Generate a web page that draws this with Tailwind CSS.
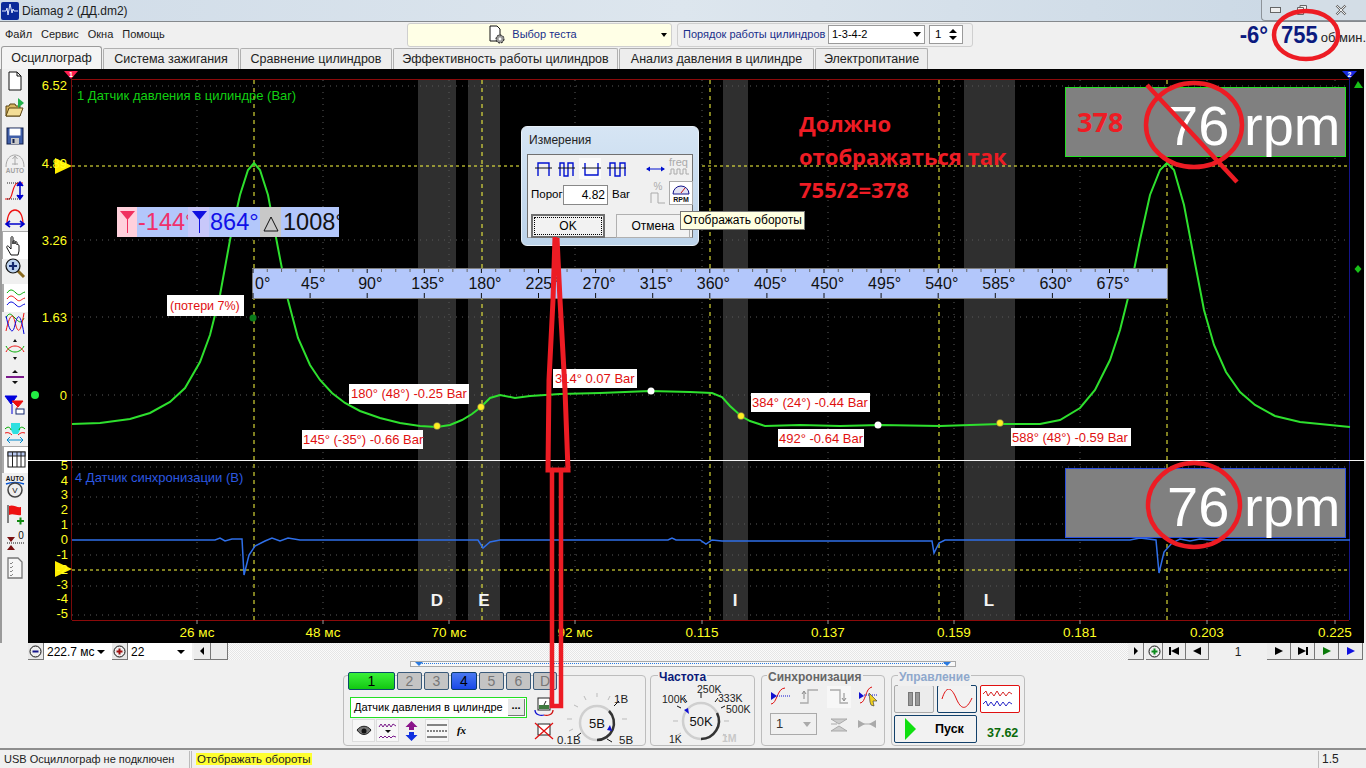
<!DOCTYPE html>
<html lang="ru">
<head>
  <meta charset="UTF-8">
  <title>Diamag 2 (ДД.dm2)</title>
  <script src="https://cdn.jsdelivr.net/npm/@tailwindcss/browser@4"></script>
</head>
<body class="relative w-[1366px] h-[768px] overflow-hidden bg-[#f0f0f0] text-[12px] text-black [font-family:'Liberation_Sans',sans-serif]">

  <!-- title bar -->
  <div class="h-[22px] flex items-center border-b border-[#85898d] bg-gradient-to-r from-[#d0dce8] via-[#dde6ee] to-[#c9d7e4]">
    <svg class="ml-[1px] w-[18px] h-[18px]" viewBox="0 0 18 18"><rect width="18" height="18" rx="2" fill="#0a2a9a"/><path d="M1 9h4l1-3 1 7 2-11 2 9 1-4 1 2h4" fill="none" stroke="#dfe8ff" stroke-width="1"/></svg>
    <span class="ml-[3px] text-[12px] text-[#1c1c1c]">Diamag 2 (ДД.dm2)</span>
    <div class="ml-auto w-[105px] h-[21px] -mt-[1px] flex items-center border border-t-0 border-r-0 border-[#8d9399] rounded-bl-[4px] bg-[#d3dde6]">
      <div class="w-[27px] flex justify-center"><div class="w-[11px] h-[6px] border border-[#666] bg-[#eee]"></div></div>
      <div class="w-[26px] flex justify-center"><svg class="w-[12px] h-[12px]" viewBox="0 0 12 12"><path d="M1.5 3.5h6v7h-6zM4 3.5V1.5h6.5v7H7.5" fill="#eee" stroke="#666"/></svg></div>
      <div class="flex-1 flex justify-center"><svg class="w-[12px] h-[12px]" viewBox="0 0 12 12"><path d="M1.5 1.5l9 9M10.5 1.5l-9 9" stroke="#666" stroke-width="2.4"/><path d="M1.5 1.5l9 9M10.5 1.5l-9 9" stroke="#eee" stroke-width="1"/></svg></div>
    </div>
  </div>

  <!-- menu and test selector -->
  <div class="h-[25px] flex items-center relative">
    <div class="flex gap-[9px] pl-[5px] w-[407px] text-[11px] text-[#222]">
      <span>Файл</span><span>Сервис</span><span>Окна</span><span>Помощь</span>
    </div>
    <div class="w-[265px] h-[24px] flex items-center justify-center relative bg-[#ffffe6] border border-[#cfcfcf] rounded-[3px]">
      <svg class="w-[22px] h-[20px] mr-[3px]" viewBox="0 0 22 20"><path d="M3 1h7l3 3v12H3z" fill="#fff" stroke="#111"/><circle cx="13" cy="14" r="4" fill="#999" stroke="#111" stroke-dasharray="2 1"/><circle cx="13" cy="14" r="1.4" fill="#fff"/></svg>
      <span class="text-[11px] text-[#1a2f8a] mr-[15px]">Выбор теста</span>
      <span class="absolute right-[4px] top-[9px] w-0 h-0 border-x-[3px] border-x-transparent border-t-[4px] border-t-black"></span>
    </div>
    <div class="ml-[5px] w-[296px] h-[24px] flex items-center border border-[#cfcfcf] rounded-[3px] pl-[5px]">
      <span class="text-[11px] text-[#1a2f8a] w-[145px] whitespace-nowrap">Порядок работы цилиндров</span>
      <div class="w-[97px] h-[19px] flex items-center justify-between px-[3px] bg-white border border-[#9a9a9a] text-[11px]">1-3-4-2<span class="w-0 h-0 border-x-[4px] border-x-transparent border-t-[5px] border-t-black"></span></div>
      <div class="ml-[4px] w-[34px] h-[19px] flex items-center justify-between px-[5px] bg-white border border-[#9a9a9a] text-[11.5px]">1<span class="flex flex-col gap-[3px]"><span class="w-0 h-0 border-x-[4px] border-x-transparent border-b-[4px] border-b-black"></span><span class="w-0 h-0 border-x-[4px] border-x-transparent border-t-[4px] border-t-black"></span></span></div>
    </div>
    <div class="ml-auto flex items-baseline text-[#0b1a7f] font-bold">
      <span class="text-[22px] mr-[13px] inline-block scale-y-[1.12]">-6°</span>
      <span class="text-[22px] mr-[3px] inline-block scale-y-[1.12]">755</span>
      <span class="text-[13px] font-normal text-[#222] whitespace-nowrap">об/мин.</span>
    </div>
  </div>

  <!-- tabs -->
  <div class="h-[22px] flex items-end pl-[1px] gap-[1px] text-[12.5px] text-[#222] whitespace-nowrap">
    <div class="w-[101px] h-[23px] flex items-center justify-center bg-[#f4f4f4] border border-b-0 border-[#9b9b9b] rounded-t-[3px]">Осциллограф</div>
    <div class="w-[136px] h-[21px] flex items-center justify-center bg-[#ededed] border border-b-0 border-[#b0b0b0] rounded-t-[2px]">Система зажигания</div>
    <div class="w-[152px] h-[21px] flex items-center justify-center bg-[#ededed] border border-b-0 border-[#b0b0b0] rounded-t-[2px]">Сравнение цилиндров</div>
    <div class="w-[225px] h-[21px] flex items-center justify-center bg-[#ededed] border border-b-0 border-[#b0b0b0] rounded-t-[2px]">Эффективность работы цилиндров</div>
    <div class="w-[195px] h-[21px] flex items-center justify-center bg-[#ededed] border border-b-0 border-[#b0b0b0] rounded-t-[2px]">Анализ давления в цилиндре</div>
    <div class="w-[113px] h-[21px] flex items-center justify-center bg-[#ededed] border border-b-0 border-[#b0b0b0] rounded-t-[2px]">Электропитание</div>
  </div>

  <!-- main row -->
  <div class="h-[574px] flex">
    <div class="w-[28px] border-l-2 border-[#9a9a9a] overflow-hidden">
      <div class="-mt-[1.5px] flex flex-col items-center -ml-[1px]">
        <div class="h-[27.3px] w-[26px] flex items-center justify-center"><svg class="w-[22px] h-[22px]" viewBox="0 0 22 22"><path d="M5 2h8l4 4v14H5z" fill="#fff" stroke="#111"/><path d="M13 2v4h4" fill="none" stroke="#111"/></svg></div>
        <div class="h-[27.3px] w-[26px] flex items-center justify-center"><svg class="w-[22px] h-[22px]" viewBox="0 0 22 22"><path d="M2 9h3l1-2h5l1 2h4v10H2z" fill="#d8b662" stroke="#5b4512"/><path d="M2 19l3-8h14l-3 8z" fill="#f3dd96" stroke="#5b4512"/><path d="M14 1l6 5-6 5z" fill="#22b14c"/></svg></div>
        <div class="h-[27.3px] w-[26px] flex items-center justify-center"><svg class="w-[22px] h-[22px]" viewBox="0 0 22 22"><rect x="3" y="3" width="16" height="16" fill="#3f5ea8" stroke="#15214a"/><rect x="5.5" y="3.5" width="11" height="7" fill="#fff"/><rect x="7" y="13" width="8" height="6" fill="#c8c8c8"/><rect x="8.5" y="14" width="2" height="4" fill="#15214a"/></svg></div>
        <div class="h-[27.3px] w-[26px] flex items-center justify-center"><svg class="w-[22px] h-[22px]" viewBox="0 0 22 22"><path d="M2 15c0-8 4-12 9-12s9 4 9 12" fill="none" stroke="#a8a8a8"/><path d="M11 4v9M8.5 7L11 4l2.500 3M8 12h6" fill="none" stroke="#a8a8a8"/><text x="11" y="21" font-size="6.500" font-weight="700" text-anchor="middle" fill="#a0a0a0">AUTO</text></svg></div>
        <div class="h-[27.3px] w-[26px] flex items-center justify-center"><svg class="w-[22px] h-[22px]" viewBox="0 0 22 22"><path d="M1 20h4c4 0 3-16 9-16h5" fill="none" stroke="#e11" stroke-width="1.200"/><path d="M3 4h11M3 20h14" stroke="#222" stroke-dasharray="1 1"/><path d="M16 4v15M13 7l3-4 3 4M13 16l3 4 3-4" fill="#00c" stroke="#00c" stroke-width="1.500"/></svg></div>
        <div class="h-[27.3px] w-[26px] flex items-center justify-center"><svg class="w-[22px] h-[22px]" viewBox="0 0 22 22"><path d="M3 18C3 7 7 3 11 3s8 4 8 15" fill="none" stroke="#e11" stroke-width="1.300"/><path d="M3 17h16M6 14l-4 3 4 3M16 14l4 3-4 3" fill="none" stroke="#00c" stroke-width="1.600"/></svg></div>
        <div class="h-[27.3px] w-[26px] flex items-center justify-center bg-white border-t border-l border-[#aaa]"><svg class="w-[22px] h-[22px]" viewBox="0 0 22 22"><path d="M7 21l-4-7c-1-2 1-3 2-1l2 2V4c0-2 2-2 2 0v6-2c0-2 2-2 2 0v2-1c0-2 2-2 2 0v2c0-1 2-1 2 1v5l-1 4z" fill="#fff" stroke="#111"/></svg></div>
        <div class="h-[27.3px] w-[26px] -mt-[4px] flex items-center justify-center"><svg class="w-[22px] h-[22px]" viewBox="0 0 22 22"><path d="M13 13l7 7" stroke="#8a6a20" stroke-width="3"/><circle cx="9" cy="9" r="7" fill="#bcd2ee" stroke="#111" stroke-width="1.200"/><path d="M5 9h8M9 5v8" stroke="#14286e" stroke-width="2.200"/></svg></div>
        <div class="h-[27.3px] w-[26px] mt-[2.5px] flex items-center justify-center bg-white border-l-2 border-[#aaa]"><svg class="w-[22px] h-[22px]" viewBox="0 0 22 22"><path d="M2 6c3-4 5-4 9 0s5 0 9-1" fill="none" stroke="#0a0"/><path d="M2 12c3-4 5-4 9 0s5 0 9-1" fill="none" stroke="#e11"/><path d="M2 18c3-4 5-4 9 0s5 0 9-1" fill="none" stroke="#00d"/></svg></div>
        <div class="h-[27.3px] w-[26px] -mt-[2.5px] flex items-center justify-center"><svg class="w-[22px] h-[22px]" viewBox="0 0 22 22"><path d="M2 6c3-7 6-3 9 0s6 7 9 0" fill="none" stroke="#0a0"/><path d="M2 19c4-18 7-18 9-9s5 16 9-9" fill="none" stroke="#e11"/><path d="M2 4c4 18 7 18 9 9s5-16 9 9" fill="none" stroke="#00d"/></svg></div>
        <div class="h-[27.3px] w-[26px] flex items-center justify-center"><svg class="w-[22px] h-[22px]" viewBox="0 0 22 22"><path d="M2 7c4 8 14 8 18 0" fill="none" stroke="#0a0"/><path d="M2 13c4-8 14-8 18 0" fill="none" stroke="#e11"/><path d="M9 3h4l-2-3zM9 18h4l-2 3z" fill="#111"/></svg></div>
        <div class="h-[27.3px] w-[26px] flex items-center justify-center"><svg class="w-[22px] h-[22px]" viewBox="0 0 22 22"><path d="M2 11h18" stroke="#7a1a8a" stroke-width="2"/><path d="M8 7l3-3 3 3zM8 15l3 3 3-3z" fill="#111"/></svg></div>
        <div class="h-[27.3px] w-[26px] flex items-center justify-center"><svg class="w-[22px] h-[22px]" viewBox="0 0 22 22"><path d="M1 2h12l-6 8zM8 10v10" fill="#00d" stroke="#00d"/><path d="M8 7h11l-5 6zM13 13v6" fill="#e11" stroke="#e11"/><rect x="12" y="15" width="8" height="5" fill="#fff" stroke="#14286e"/></svg></div>
        <div class="h-[27.3px] w-[26px] flex items-center justify-center"><svg class="w-[22px] h-[22px]" viewBox="0 0 22 22"><path d="M7 2h9v7l-2 4H9L7 9z" fill="#2fe0e0"/><path d="M1 8c3-3 5-2 6 1M15 9c1-3 3-4 6-1" fill="none" stroke="#0a0"/><path d="M1 12c3-1 5 0 7 2M14 14c2-2 4-3 7-2" fill="none" stroke="#e11"/><path d="M4 19h14M6 16l-3 3 3 3M16 16l3 3-3 3" fill="none" stroke="#08c"/></svg></div>
        <div class="h-[27.3px] w-[26px] flex items-center justify-center bg-white border-t border-l-2 border-[#aaa]"><svg class="w-[22px] h-[22px]" viewBox="0 0 22 22"><rect x="3" y="3" width="17" height="15" fill="#fff" stroke="#222"/><rect x="3" y="3" width="17" height="4" fill="#b7c8f0" stroke="#222"/><path d="M7.500 3v15M12 3v15M16 3v15" stroke="#222"/></svg></div>
        <div class="h-[27.3px] w-[26px] flex items-center justify-center"><svg class="w-[22px] h-[24px]" viewBox="0 0 22 24"><text x="11" y="6" font-size="6.500" font-weight="700" text-anchor="middle" fill="#111">AUTO</text><path d="M2 9c5-2 13-2 18 0" fill="none" stroke="#0050d0" stroke-width="1.500"/><circle cx="11" cy="15" r="7" fill="#eee" stroke="#444" stroke-width="1.500"/><text x="11" y="18" font-size="8" text-anchor="middle" fill="#111">V</text></svg></div>
        <div class="h-[27.3px] w-[26px] flex items-center justify-center"><svg class="w-[22px] h-[22px]" viewBox="0 0 22 22"><path d="M4 2v18" stroke="#111"/><path d="M5 3c4-2 8 2 12 1v8c-4 1-8-2-12 0z" fill="#e11"/><path d="M13 18h7M16.500 14.500v7" stroke="#128a12" stroke-width="2"/></svg></div>
        <div class="h-[27.3px] w-[26px] flex items-center justify-center"><svg class="w-[22px] h-[22px]" viewBox="0 0 22 22"><path d="M3 7h8l-4 5zM3 20h8l-4-5z" fill="#7a1010"/><path d="M3 13h18" stroke="#111" stroke-dasharray="1 1"/><text x="17" y="9" font-size="10" text-anchor="middle" fill="#111">0</text></svg></div>
        <div class="h-[27.3px] w-[26px] flex items-center justify-center"><svg class="w-[22px] h-[22px]" viewBox="0 0 22 22"><path d="M4 1h10l4 4v16H4z" fill="#f6f6f6" stroke="#777" stroke-width="1.300"/><path d="M6 6l1 1 2-2M6 10l1 1 2-2M6 14l1 1 2-2M6 18l1 1 2-2" fill="none" stroke="#888"/></svg></div>
      </div>
    </div>

    <!-- oscillogram canvas -->
    <div class="relative w-[1336px] h-[574px] bg-black overflow-hidden">
      <svg id="scope" class="absolute inset-0 w-[1336px] h-[574px]" viewBox="28 69 1336 574">
        <g id="bands" fill="#2f2f2f">
          <rect x="418" y="80" width="38" height="540"/>
          <rect x="468" y="80" width="32" height="540"/>
          <rect x="723" y="80" width="25" height="540"/>
          <rect x="964" y="80" width="51" height="540"/>
        </g>
        <g id="grid" stroke="#5a5a5a" stroke-dasharray="1 5"></g>
        <g id="cursors" stroke="#ffff40" stroke-dasharray="4 4">
          <path d="M254 80V620M482 80V620M710 80V620M939 80V620M1167 80V620"/>
          <path d="M72 166H1349M72 570H1349" stroke-dasharray="3 3"/>
        </g>
        <path d="M71 79.500H1349M72 620.500H1349" stroke="#8b0a0a"/>
        <path d="M71.500 79V620" stroke="#7a0a0a"/>
        <path d="M1349.500 79V620" stroke="#14148a"/>
        <path d="M28 460.500H1364" stroke="#f4f4f4"/>
        <path d="M64 71h14l-7 8z" fill="#ff2050"/>
        <path d="M1342 71h15l-7.500 8z" fill="#1a2be0"/>
        <text x="71" y="76.500" font-size="7" font-weight="700" text-anchor="middle" fill="#fff">1</text>
        <text x="1349.500" y="76.500" font-size="7" font-weight="700" text-anchor="middle" fill="#fff">2</text>
        <path d="M1354 88l4-7 5 7z" fill="#18c018"/>
        <path d="M1358 265l3.500 4-3.500 4-3.500-4z" fill="#18c018"/>
        <circle cx="35" cy="395" r="4" fill="#22ee44"/>
        <path d="M55 158l17 8-17 8z" fill="#ffee00"/>
        <path d="M55 561l17 8-17 8z" fill="#ffee00"/>

        <polyline fill="none" stroke="#2ee02e" stroke-width="2" points="72,424 100,423 130,419 150,413 170,402 185,388 200,362 210,335 220,295 230,240 240,195 248,170 254,163 260,170 268,195 278,248 288,300 298,338 310,365 320,380 332,393 345,403 360,411 380,418 400,423 420,426 437,427 450,425 462,420 472,414 481,407 490,398 500,395 515,398 530,396 560,394 600,393 650,391 690,392 712,393 722,397 730,406 741,416 750,421 765,426 800,425 840,426 880,425 940,426 1000,424 1040,424 1060,420 1080,408 1095,390 1110,360 1120,330 1130,290 1140,240 1150,195 1160,170 1167,163 1174,170 1184,205 1194,258 1204,310 1214,345 1226,372 1240,392 1255,405 1275,416 1300,422 1330,425 1350,427"/>
        <path fill="none" stroke="#2f6fe8" stroke-width="1.500" d="M72 540H215L220 538L225 541L232 539H242L244 575L249 555L255 546L265 541L272 538L280 541L288 538L300 540H478L483 548L490 542L500 540H668L672 538L676 540H700L706 544L712 540L722 541H932L934 553L939 543L945 540H1130L1140 538L1156 540L1159 573L1164 552L1172 543L1180 539L1190 541L1200 539L1210 540H1350"/>

        <g fill="#ffee22" stroke="#555" stroke-width=".5">
          <circle cx="437" cy="426" r="3.500"/><circle cx="481" cy="407" r="3.500"/><circle cx="741" cy="416" r="3.500"/><circle cx="1000" cy="423" r="3.500"/>
        </g>
        <circle cx="651" cy="391" r="3.500" fill="#fff"/><circle cx="878" cy="425" r="3.500" fill="#fff"/>
        <circle cx="253" cy="318" r="3.500" fill="#0a7a1a"/>

        <g id="yaxis" fill="#ffff20" font-size="13"></g>
        <g id="xaxis" fill="#ffff20" font-size="13.500" text-anchor="middle"></g>

        <text x="77" y="100" fill="#12d012" font-size="13">1 Датчик давления в цилиндре (Bar)</text>
        <text x="75" y="482" fill="#2c58e0" font-size="13">4 Датчик синхронизации (В)</text>

        <g fill="#f4f4f4" font-size="17" font-weight="700" text-anchor="middle">
          <text x="437" y="606">D</text><text x="484" y="606">E</text><text x="735" y="606">I</text><text x="989" y="606">L</text>
        </g>

        <!-- angle ruler -->
        <rect x="252.500" y="268.500" width="915" height="30" fill="#b3c7fb" stroke="#808080"/>
        <g id="ruler" font-size="16" fill="#111"></g>

        <!-- rpm plates -->
        <rect x="1065.500" y="87.500" width="280" height="69" fill="#808080" stroke="#22e022"/>
        <rect x="1065.500" y="468.500" width="280" height="69" fill="#808080" stroke="#2a4fe0"/>
        <g fill="#fff" font-size="56">
          <text x="1167" y="145">76</text><text x="1244" y="145">rpm</text>
          <text x="1167" y="526">76</text><text x="1244" y="526">rpm</text>
        </g>

        <!-- note labels -->
        <g id="notes" font-size="13" fill="#e01010">
          <rect x="167" y="295" width="77" height="21" fill="#fff"/><text x="170" y="310" font-size="12.500">(потери 7%)</text>
          <rect x="349" y="384" width="120" height="20" fill="#fff"/><text x="351" y="398">180° (48°) -0.25 Bar</text>
          <rect x="302" y="430" width="121" height="19" fill="#fff"/><text x="303" y="444">145° (-35°) -0.66 Bar</text>
          <rect x="553" y="369" width="84" height="19" fill="#fff"/><text x="555" y="383">314° 0.07 Bar</text>
          <rect x="751" y="393" width="119" height="19" fill="#fff"/><text x="752" y="407">384° (24°) -0.44 Bar</text>
          <rect x="778" y="429" width="86" height="18" fill="#fff"/><text x="779" y="443">492° -0.64 Bar</text>
          <rect x="1011" y="428" width="120" height="18" fill="#fff"/><text x="1012" y="442">588° (48°) -0.59 Bar</text>
        </g>

        <!-- angle readout -->
        <rect x="117" y="207" width="222" height="30" fill="#b3c7fb"/>
        <rect x="117" y="207" width="20" height="30" fill="#ffd0dc"/>
        <rect x="188" y="207" width="21" height="30" fill="#c8c8fa"/>
        <rect x="260" y="207" width="21" height="30" fill="#c8c8c8"/>
        <path d="M120 211h15l-7.500 9z" fill="#f0305f"/><path d="M127.500 218v15" stroke="#f0305f"/>
        <path d="M192 211h15l-7.500 9z" fill="#1010e0"/><path d="M199.500 218v15" stroke="#1010e0"/>
        <path d="M271 217l-7 14h14z" fill="none" stroke="#111"/>
        <g font-size="23.500">
          <svg x="138" y="207" width="50" height="30"><text x="0" y="23" fill="#f0306a">-144°</text></svg>
          <text x="210" y="230" fill="#1010e8">864°</text>
          <svg x="283" y="207" width="56" height="30"><text x="0" y="23" fill="#111">1008°</text></svg>
        </g>
      </svg>

      <!-- measurements dialog -->
      <div class="absolute left-[493px] top-[57px] w-[178px] h-[120px] rounded-[6px] bg-gradient-to-b from-[#d6e5f4] to-[#bcd3ea] border border-[#e8f0f8] shadow">
        <div class="h-[27px] pl-[7px] pt-[4px] text-[12px] text-[#222]">Измерения</div>
        <div class="mx-[5px] h-[84px] bg-[#f0f0f0] border border-[#707070] border-b-[#a0a0a0] pt-[3px] pl-[3px]">
          <div class="flex items-center h-[25px]">
            <svg class="w-[158px] h-[25px]" viewBox="0 0 158 25"><rect x="48" y="0" width="22" height="21" fill="#fafafa"/><g fill="none" stroke="#0010d0" stroke-width="1.400"><path d="M7 18V5h11v13"/><path d="M4 10h17" stroke="#111" stroke-width="1"/><path d="M29 18V5h4v13h4V5h5v13"/><path d="M27 10h17" stroke="#111" stroke-width="1"/><path d="M54 5v12h13V5"/><path d="M51 10h19" stroke="#111" stroke-width="1"/><path d="M79 18V5h5v13h5V5h5v13"/><path d="M76 10h19" stroke="#111" stroke-width="1"/></g><path d="M116 11h17" stroke="#0010d0"/><path d="M115 11l4-2.500v5zM134 11l-4-2.500v5z" fill="#0010d0"/></svg>
          </div>
          <div class="flex items-center h-[25px] -mt-[1px] relative">
            <span class="text-[11.5px] w-[32px]">Порог</span>
            <div class="w-[45px] h-[20px] bg-white border border-[#888] text-right pr-[2px] text-[12px] leading-[18px]">4.82</div>
            <span class="ml-[4px] text-[11.5px]">Bar</span>
            <svg class="absolute left-[118px] top-[-1px] w-[18px] h-[24px]" viewBox="0 0 18 24"><path d="M2 22V12h7v10h7" fill="none" stroke="#aaa"/><text x="9" y="9" font-size="10" text-anchor="middle" fill="#aaa">%</text></svg>
            <div class="absolute left-[138px] -top-[1px] w-[24px] h-[24px] bg-white border border-[#aaa]"><svg class="w-[22px] h-[22px]" viewBox="0 0 22 22"><path d="M3 12a8 8 0 0 1 16 0z" fill="#e4e4f4" stroke="#14148a"/><path d="M11 11l4-5" stroke="#c01010"/><text x="11" y="20" font-size="7" font-weight="700" text-anchor="middle" fill="#111">RPM</text></svg></div>
            <div class="absolute left-[138px] -top-[25px] text-[11px] leading-[11px] text-[#aaa]">freq<svg class="w-[20px] h-[7px]" viewBox="0 0 20 7"><path d="M0 6h2V1h3v5h3V1h3v5h3V1h3v5h3" fill="none" stroke="#aaa"/></svg></div>
          </div>
          <div class="flex gap-[11px] mt-[7px]">
            <div class="w-[74px] h-[24px] flex items-center justify-center border-2 border-[#707070] bg-[#f2f2f2]"><div class="w-[68px] h-[18px] border border-dotted border-black text-center text-[12px] leading-[16px]">OK</div></div>
            <div class="w-[74px] h-[24px] flex items-center justify-center border border-[#b0b0b0] bg-[#f2f2f2] text-[12px]">Отмена</div>
          </div>
        </div>
      </div>
      <div class="absolute left-[652px] top-[142px] w-[125px] h-[19px] bg-[#ffffe1] border border-[#777] text-[12px] leading-[17px] text-center whitespace-nowrap">Отображать обороты</div>
    </div>
  </div>

  <!-- scroll row -->
  <div class="h-[17px] ml-[28px] flex items-stretch text-[12px]">
    <div class="w-[16px] bg-[#e8e8e8] border-b border-r border-[#777] flex items-center justify-center"><svg class="w-[13px] h-[13px]" viewBox="0 0 13 13"><circle cx="6.500" cy="6.500" r="5.500" fill="#eee" stroke="#111"/><path d="M3.500 6.500h6" stroke="#14148a" stroke-width="2"/></svg></div>
    <div class="w-[68px] bg-white flex items-center justify-between pl-[3px] pr-[7px]">222.7 мс<span class="w-0 h-0 border-x-[4px] border-x-transparent border-t-[4px] border-t-black"></span></div>
    <div class="w-[16px] bg-[#e8e8e8] border-b border-r border-[#777] flex items-center justify-center"><svg class="w-[13px] h-[13px]" viewBox="0 0 13 13"><circle cx="6.500" cy="6.500" r="5.500" fill="#eee" stroke="#111"/><path d="M3.500 6.500h6M6.500 3.500v6" stroke="#a01010" stroke-width="2"/></svg></div>
    <div class="w-[64px] bg-white flex items-center justify-between pl-[3px] pr-[7px]">22<span class="w-0 h-0 border-x-[4px] border-x-transparent border-t-[4px] border-t-black"></span></div>
    <div class="w-[17px] ml-[2px] bg-[#ececec] border-b border-r border-[#777] flex items-center justify-center"><span class="w-0 h-0 border-y-[4px] border-y-transparent border-r-[4px] border-r-black"></span></div>
    <div class="w-[17px] bg-[#ececec] border-b border-r border-[#777]"></div>
    <div class="w-[900px] bg-[repeating-conic-gradient(#e6e6e6_0_25%,#fbfbfb_0_50%)] bg-[length:2px_2px]"></div>
    <div class="w-[16px] bg-[#ececec] border-b border-r border-[#777] flex items-center justify-center"><span class="w-0 h-0 border-y-[4px] border-y-transparent border-l-[4px] border-l-black"></span></div>
    <div class="w-[17px] ml-[2px] flex items-center justify-center bg-[#ececec] border-b border-r border-[#777]"><svg class="w-[13px] h-[13px]" viewBox="0 0 13 13"><circle cx="6.500" cy="6.500" r="5.500" fill="#eee" stroke="#111"/><path d="M3.500 6.500h6M6.500 3.500v6" stroke="#0a8a1a" stroke-width="2"/></svg></div>
    <div class="w-[23px] flex items-center justify-center bg-[#ececec] border-b border-r border-[#777]"><span class="w-[2px] h-[8px] bg-black"></span><span class="w-0 h-0 border-y-[4px] border-y-transparent border-r-[8px] border-r-black"></span></div>
    <div class="w-[23px] flex items-center justify-center bg-[#ececec] border-b border-r border-[#777]"><span class="w-0 h-0 border-y-[4px] border-y-transparent border-r-[8px] border-r-black"></span></div>
    <div class="w-[58px] flex items-center justify-center text-[12px] text-[#222]">1</div>
    <div class="w-[24px] flex items-center justify-center bg-[#ececec] border-b border-r border-[#777]"><span class="w-0 h-0 border-y-[4px] border-y-transparent border-l-[8px] border-l-black"></span></div>
    <div class="w-[24px] flex items-center justify-center bg-[#ececec] border-b border-r border-[#777]"><span class="w-0 h-0 border-y-[4px] border-y-transparent border-l-[8px] border-l-black"></span><span class="w-[2px] h-[8px] bg-black"></span></div>
    <div class="w-[24px] flex items-center justify-center bg-[#ececec] border-b border-r border-[#777]"><span class="w-0 h-0 border-y-[4px] border-y-transparent border-l-[8px] border-l-[#0a7a0a]"></span></div>
    <div class="w-[24px] flex items-center justify-center bg-[#ececec] border-b border-r border-[#777]"><span class="w-0 h-0 border-y-[4px] border-y-transparent border-l-[8px] border-l-[#1010e0]"></span></div>
  </div>

  <!-- control panel -->
  <div class="h-[88px] pt-[1px]">
    <div class="relative ml-[410px] w-[546px] h-[6px] bg-[#f8f8f8] border border-[#a8a8a8]">
      <div class="absolute left-[8px] right-[8px] top-[1px] border-t border-dotted border-[#2a7ae0]"></div>
      <span class="absolute left-[4px] top-0 w-0 h-0 border-x-[4px] border-x-transparent border-t-[4px] border-t-[#2a7ae0]"></span>
      <span class="absolute right-[4px] top-0 w-0 h-0 border-x-[4px] border-x-transparent border-t-[4px] border-t-[#2a7ae0]"></span>
    </div>
    <div class="flex ml-[343px] mt-[8px] gap-[4px]">

      <!-- channels -->
      <div class="relative w-[303px] h-[71px] border border-[#bdbdbd] rounded-[4px]">
        <div class="flex gap-[2px] ml-[4px] -mt-[4px] text-[14px] text-center leading-[16px]">
          <div class="w-[47px] h-[18px] bg-gradient-to-b from-[#38f038] to-[#10c810] border border-[#0a4a6a] rounded-[2px] text-black">1</div>
          <div class="w-[25px] h-[18px] bg-[#c4c4c4] border border-[#3a5a7a] rounded-[2px] text-[#777]">2</div>
          <div class="w-[25px] h-[18px] bg-[#c4c4c4] border border-[#3a5a7a] rounded-[2px] text-[#777]">3</div>
          <div class="w-[26px] h-[18px] bg-gradient-to-b from-[#4a78f0] to-[#1a48e8] border border-[#0a3a6a] rounded-[2px] text-black">4</div>
          <div class="w-[25px] h-[18px] bg-[#c4c4c4] border border-[#3a5a7a] rounded-[2px] text-[#777]">5</div>
          <div class="w-[25px] h-[18px] bg-[#c4c4c4] border border-[#3a5a7a] rounded-[2px] text-[#777]">6</div>
          <div class="w-[24px] h-[18px] bg-[#c4c4c4] border border-[#3a5a7a] rounded-[2px] text-[#777]">D</div>
        </div>
        <div class="ml-[6px] mt-[7px] w-[177px] h-[21px] flex items-center justify-between bg-white border border-[#22e022] pl-[3px] pr-[1px] text-[11px] whitespace-nowrap">
          Датчик давления в цилиндре
          <span class="w-[17px] h-[17px] bg-[#e8e8e8] border-b border-r border-[#777] text-center text-[11px] leading-[12px] font-bold">...</span>
        </div>
        <div class="ml-[8px] mt-[1px] flex gap-[1px] items-center">
          <div class="w-[23px] h-[23px] bg-[#f7f7f7] border border-[#ddd] flex items-center justify-center"><svg class="w-[16px] h-[14px]" viewBox="0 0 16 14"><path d="M1 6c4-5 10-5 14 0-4 6-10 6-14 0z" fill="#777" stroke="#222"/><circle cx="8" cy="7" r="2.500" fill="#111"/></svg></div>
          <div class="w-[23px] h-[23px] bg-[#f7f7f7] border border-[#ddd] flex items-center justify-center"><svg class="w-[20px] h-[20px]" viewBox="0 0 20 20"><path d="M1 6l2-3 2 3 2-3 2 3 2-3 2 3 2-3 3 2" fill="none" stroke="#7a1a8a"/><path d="M1 17l2-2 2 2 2-2 2 2 2-2 2 2 2-2 3 1" fill="none" stroke="#7a1a8a"/><path d="M7 9h6l-3 3z" fill="#111"/></svg></div>
          <div class="w-[23px] h-[23px] flex items-center justify-center"><svg class="w-[19px] h-[22px]" viewBox="0 0 19 22"><path d="M9.500 1l6 6h-3.500v3H7V7H3.500z" fill="#8a148a"/><path d="M9.500 21l6-6h-3.500v-3H7v3H3.500z" fill="#1030e0"/></svg></div>
          <div class="w-[24px] h-[23px] ml-[1px] bg-[#f7f7f7] border border-[#ddd] flex items-center justify-center"><svg class="w-[20px] h-[14px]" viewBox="0 0 20 14"><path d="M0 1h20M0 13h20" stroke="#111"/><path d="M0 7h20" stroke="#111" stroke-dasharray="2 1"/></svg></div>
          <div class="w-[23px] h-[23px] flex items-center justify-center text-[11px] italic font-bold [font-family:'Liberation_Serif',serif]">fx</div>
        </div>
        <svg class="absolute left-[189px] top-[20px] w-[22px] h-[50px]" viewBox="0 0 22 50"><rect x="5" y="2" width="12" height="12" fill="#fff" stroke="#222"/><rect x="6" y="9" width="10" height="4" fill="#3f7a3f"/><path d="M11 9l2-4" stroke="#222"/><path d="M2 14c0 5 6 6 9 5" fill="none" stroke="#1010d0" stroke-width="1.300"/><path d="M20 14c0 5-6 6-9 5" fill="none" stroke="#d01010" stroke-width="1.300"/><rect x="5" y="28" width="12" height="11" fill="#fff" stroke="#222"/><path d="M2 27l18 16M20 27L2 43" stroke="#e01010" stroke-width="1.300"/></svg>
        <svg class="absolute left-[212px] top-[14px] w-[90px] h-[56px]" viewBox="555 689 90 56">
          <g stroke="#bbb"><path d="M596 692v4M583 695l2 4M609 695l-2 4M573 704l4 2M566 718h5M568 730l4-2M626 718h-5"/></g>
          <path d="M618 700l-5 5M606 738l5 3" stroke="#111"/><path d="M580 732l-4 3" stroke="#111"/>
          <circle cx="596" cy="722" r="17" fill="none" stroke="#cfcfcf" stroke-width="2.500"/>
          <path d="M596 739a17 17 0 0 0 12-29" fill="none" stroke="#333" stroke-width="2.500"/>
          <path d="M606 729l5 1-2-6z" fill="#1010d0"/>
          <text x="596" y="727" font-size="13" text-anchor="middle" fill="#111">5B</text>
          <text x="613" y="702" font-size="11.500" fill="#222">1B</text>
          <text x="556" y="743" font-size="11.500" fill="#222">0.1B</text>
          <text x="618" y="743" font-size="11.500" fill="#222">5B</text>
        </svg>
      </div>

      <!-- frequency -->
      <div class="relative w-[105px] h-[71px] border border-[#bdbdbd] rounded-[4px]">
        <span class="absolute left-[7px] -top-[8px] px-[1px] bg-[#f0f0f0] text-[12px] font-bold text-[#0a1a7a]">Частота</span>
        <svg class="absolute left-0 top-0 w-[103px] h-[69px]" viewBox="651 676 103 69">
          <g stroke="#bbb"><path d="M681 733l-5 3M723 734l4 3M678 721h-5M724 721h5"/></g>
          <path d="M701 698v-5M687 702l-3-4M715 702l3-4M681 708l-4-2M721 708l4-2" stroke="#111"/>
          <circle cx="701" cy="721" r="18" fill="none" stroke="#cfcfcf" stroke-width="2.500"/>
          <path d="M701 739a18 18 0 0 0 16-26" fill="none" stroke="#333" stroke-width="2.500"/>
          <path d="M688 708l-4 2 5 4z" fill="#1010d0"/>
          <text x="701" y="726" font-size="13" text-anchor="middle" fill="#111">50K</text>
          <g font-size="10.500" fill="#222"><text x="697" y="693">250K</text><text x="662" y="703">100K</text><text x="718" y="702">333K</text><text x="726" y="713">500K</text><text x="669" y="743">1K</text></g>
          <text x="722" y="742" font-size="10.500" font-weight="700" fill="#c8c8c8">1M</text>
        </svg>
      </div>

      <!-- sync -->
      <div class="relative w-[124px] h-[71px] ml-[2px] border border-[#bdbdbd] rounded-[4px]">
        <span class="absolute left-[5px] -top-[8px] px-[1px] bg-[#f0f0f0] text-[12px] font-bold text-[#666]">Синхронизация</span>
        <div class="flex items-center gap-[7px] pl-[7px] pt-[8px] h-[32px]">
          <svg class="w-[22px] h-[22px]" viewBox="0 0 22 22"><path d="M2 19c6 0 6-16 14-16" fill="none" stroke="#e01010"/><path d="M2 7l6 4-6 4z" fill="#1010d0"/><path d="M8 11h13" stroke="#1010d0" stroke-dasharray="1 1"/></svg>
          <svg class="w-[22px] h-[22px]" viewBox="0 0 22 22"><path d="M2 18h8V5h10" fill="none" stroke="#aaa" stroke-width="1.300"/><path d="M6 14V7M4 9l2-3 2 3" fill="none" stroke="#888"/></svg>
          <div class="w-[24px] h-[24px] bg-[#f7f7f7] flex items-center justify-center"><svg class="w-[22px] h-[22px]" viewBox="0 0 22 22"><path d="M2 5h10v13h8" fill="none" stroke="#aaa" stroke-width="1.300"/><path d="M16 8v7M14 13l2 3 2-3" fill="none" stroke="#888"/></svg></div>
          <svg class="w-[24px] h-[22px]" viewBox="0 0 24 22"><path d="M2 18c6 0 5-15 12-16" fill="none" stroke="#e01010"/><path d="M1 7l5 4-5 3z" fill="#1010d0"/><path d="M6 10h14" stroke="#1010d0" stroke-dasharray="1 1"/><path d="M11 8l8 8-4 0 1 5-3-1-1-3z" fill="#f0d020" stroke="#333" stroke-width=".6"/></svg>
        </div>
        <div class="flex items-center pl-[8px] mt-[5px]">
          <div class="w-[47px] h-[22px] bg-[#f0f0f0] border border-[#aaa] flex items-center justify-between px-[5px] text-[13px] text-[#333]">1<span class="w-0 h-0 border-x-[4px] border-x-transparent border-t-[5px] border-t-[#aaa]"></span></div>
          <svg class="ml-[11px] w-[22px] h-[20px]" viewBox="0 0 22 20"><path d="M3 5h16l-8 5zM3 17h16l-8-5zM3 10l6 0" fill="#ccc" stroke="#aaa"/></svg>
          <svg class="ml-[7px] w-[20px] h-[12px]" viewBox="0 0 20 12"><path d="M1 2l7 4-7 4zM19 2l-7 4 7 4z" fill="#aaa"/><path d="M1 6h18" stroke="#aaa"/></svg>
        </div>
      </div>

      <!-- control -->
      <div class="relative w-[134px] h-[71px] ml-[2px] border border-[#bdbdbd] rounded-[4px] pl-[2px] pt-[9px]">
        <span class="absolute left-[6px] -top-[8px] px-[1px] bg-[#f0f0f0] text-[12px] font-bold text-[#8fa8cc]">Управление</span>
        <div class="flex gap-[3px]">
          <div class="w-[40px] h-[28px] flex items-center justify-center gap-[2px] bg-[#ececec] border border-[#aaa] rounded-[2px]"><span class="w-[5px] h-[14px] bg-[#999] border border-[#777]"></span><span class="w-[5px] h-[14px] bg-[#999] border border-[#777]"></span></div>
          <div class="w-[40px] h-[28px] flex items-center justify-center bg-[#f2f2f2] border border-[#12406a] rounded-[2px]"><svg class="w-[32px] h-[20px]" viewBox="0 0 32 20"><path d="M1 10C5-3 10-3 15 9s10 13 16 0" fill="none" stroke="#e01010"/></svg></div>
          <div class="w-[40px] h-[28px] flex items-center justify-center bg-white border border-[#e01010] rounded-[2px]"><svg class="w-[36px] h-[22px]" viewBox="0 0 36 22"><path d="M1 6l3-3 2 5 3-4 3 4 3-5 3 5 3-4 3 4 3-4 3 2" fill="none" stroke="#d01010" stroke-width=".9"/><path d="M1 16l3-3 2 5 3-4 3 4 3-5 3 5 3-4 3 4 3-4 3 2" fill="none" stroke="#1010c0" stroke-width=".9"/></svg></div>
        </div>
        <div class="flex items-center mt-[2px]">
          <div class="w-[83px] h-[28px] flex items-center bg-[#f2f2f2] border border-[#12406a] rounded-[2px] pl-[10px]">
            <span class="w-0 h-0 border-y-[11px] border-y-transparent border-l-[11px] border-l-[#10e010]"></span>
            <span class="ml-[19px] text-[12.5px] font-bold">Пуск</span>
          </div>
          <span class="ml-[10px] mt-[8px] text-[12.5px] font-bold text-[#0a6a0a]">37.62</span>
        </div>
      </div>
    </div>
  </div>

  <!-- status bar -->
  <div class="h-[20px] flex border-t-2 border-[#8e8e8e] pt-[1px] text-[11px] text-[#222]">
    <div class="w-[190px] pl-[4px] border-r border-[#bbb] leading-[17px] whitespace-nowrap">USB Осциллограф не подключен</div>
    <div class="pl-[4px] leading-[17px] flex-1 border-l border-[#bbb] ml-[1px] text-[11.5px]"><span class="bg-[#ffff30] px-[1px]">Отображать обороты</span></div>
    <div class="w-[48px] pl-[3px] leading-[17px] border-l border-[#bbb] text-[12px]">1.5</div>
  </div>

  <!-- red hand-drawn annotations over the screenshot -->
  <svg class="absolute inset-0 z-50 w-[1366px] h-[768px] pointer-events-none" viewBox="0 0 1366 768">
    <g fill="none" stroke="#ed1c24" stroke-width="4.500">
      <ellipse cx="1306" cy="35" rx="32" ry="24"/>
      <ellipse cx="1194" cy="125" rx="48" ry="42"/>
      <ellipse cx="1194" cy="505" rx="46" ry="42"/>
      <path d="M1147 85L1237 182"/>
      <path d="M555 237L553 300L549 380L548 470H568L565 390L560 300L557 238" stroke-width="5"/>
      <path d="M552 470V706H561V470"/>
    </g>
    <g fill="#ed1c24" font-weight="700" font-size="22" style="font-family:'Open Sans',sans-serif">
      <text x="799" y="132">Должно</text>
      <text x="799" y="165">отображаться так</text>
      <text x="799" y="198">755/2=378</text>
      <text x="1077" y="132" font-size="27">378</text>
    </g>
  </svg>

  <script>
    const ns = 'http://www.w3.org/2000/svg';
    function add(parent, tag, attrs, txt) {
      const el = document.createElementNS(ns, tag);
      for (const k in attrs) el.setAttribute(k, attrs[k]);
      if (txt !== undefined) el.textContent = txt;
      parent.appendChild(el);
    }

    // grid
    const grid = document.getElementById('grid');
    const xt = [197, 323, 449, 575, 702, 828, 954, 1080, 1207, 1335];
    xt.forEach(x => add(grid, 'path', { d: `M${x} 80V620` }));
    [86, 240, 317, 395].forEach(y => add(grid, 'path', { d: `M72 ${y}H1349` }));
    [467, 497, 524, 555, 586, 615].forEach(y => add(grid, 'path', { d: `M72 ${y}H1349` }));

    // y axis
    const ya = document.getElementById('yaxis');
    [['6.52', 85], ['4.89', 163], ['3.26', 240], ['1.63', 317], ['0', 395]].forEach(([t, y]) =>
      add(ya, 'text', { x: 67, y: y + 5, 'text-anchor': 'end' }, t));
    for (let v = 5; v >= -5; v--) {
      const y = 540 - v * 14.85;
      add(ya, 'text', { x: 68, y: y + 4, 'text-anchor': 'end' }, v);
    }

    // x axis
    const xa = document.getElementById('xaxis');
    ['26 мс', '48 мс', '70 мс', '92 мс', '0.115', '0.137', '0.159', '0.181', '0.203', '0.225'].forEach((t, i) => {
      add(xa, 'text', { x: xt[i], y: 637 }, t);
      add(xa, 'path', { d: `M${xt[i]} 620V624`, stroke: '#999' });
    });

    // ruler
    const ruler = document.getElementById('ruler');
    for (let i = 0; i < 64; i++) {
      const x = 253 + i * 14.275, major = i % 4 === 0;
      add(ruler, 'path', { d: `M${x} 269V${major ? 273 : 272}`, stroke: major ? '#111' : '#666' });
      if (major) {
        const deg = i / 4 * 45;
        add(ruler, 'path', { d: `M${x} 293V298`, stroke: '#111' });
        add(ruler, 'text', { x: x + (i === 0 ? 2 : deg > 90 ? -13 : -9), y: 289 }, deg + '°');
      }
    }
  </script>
</body>
</html>
